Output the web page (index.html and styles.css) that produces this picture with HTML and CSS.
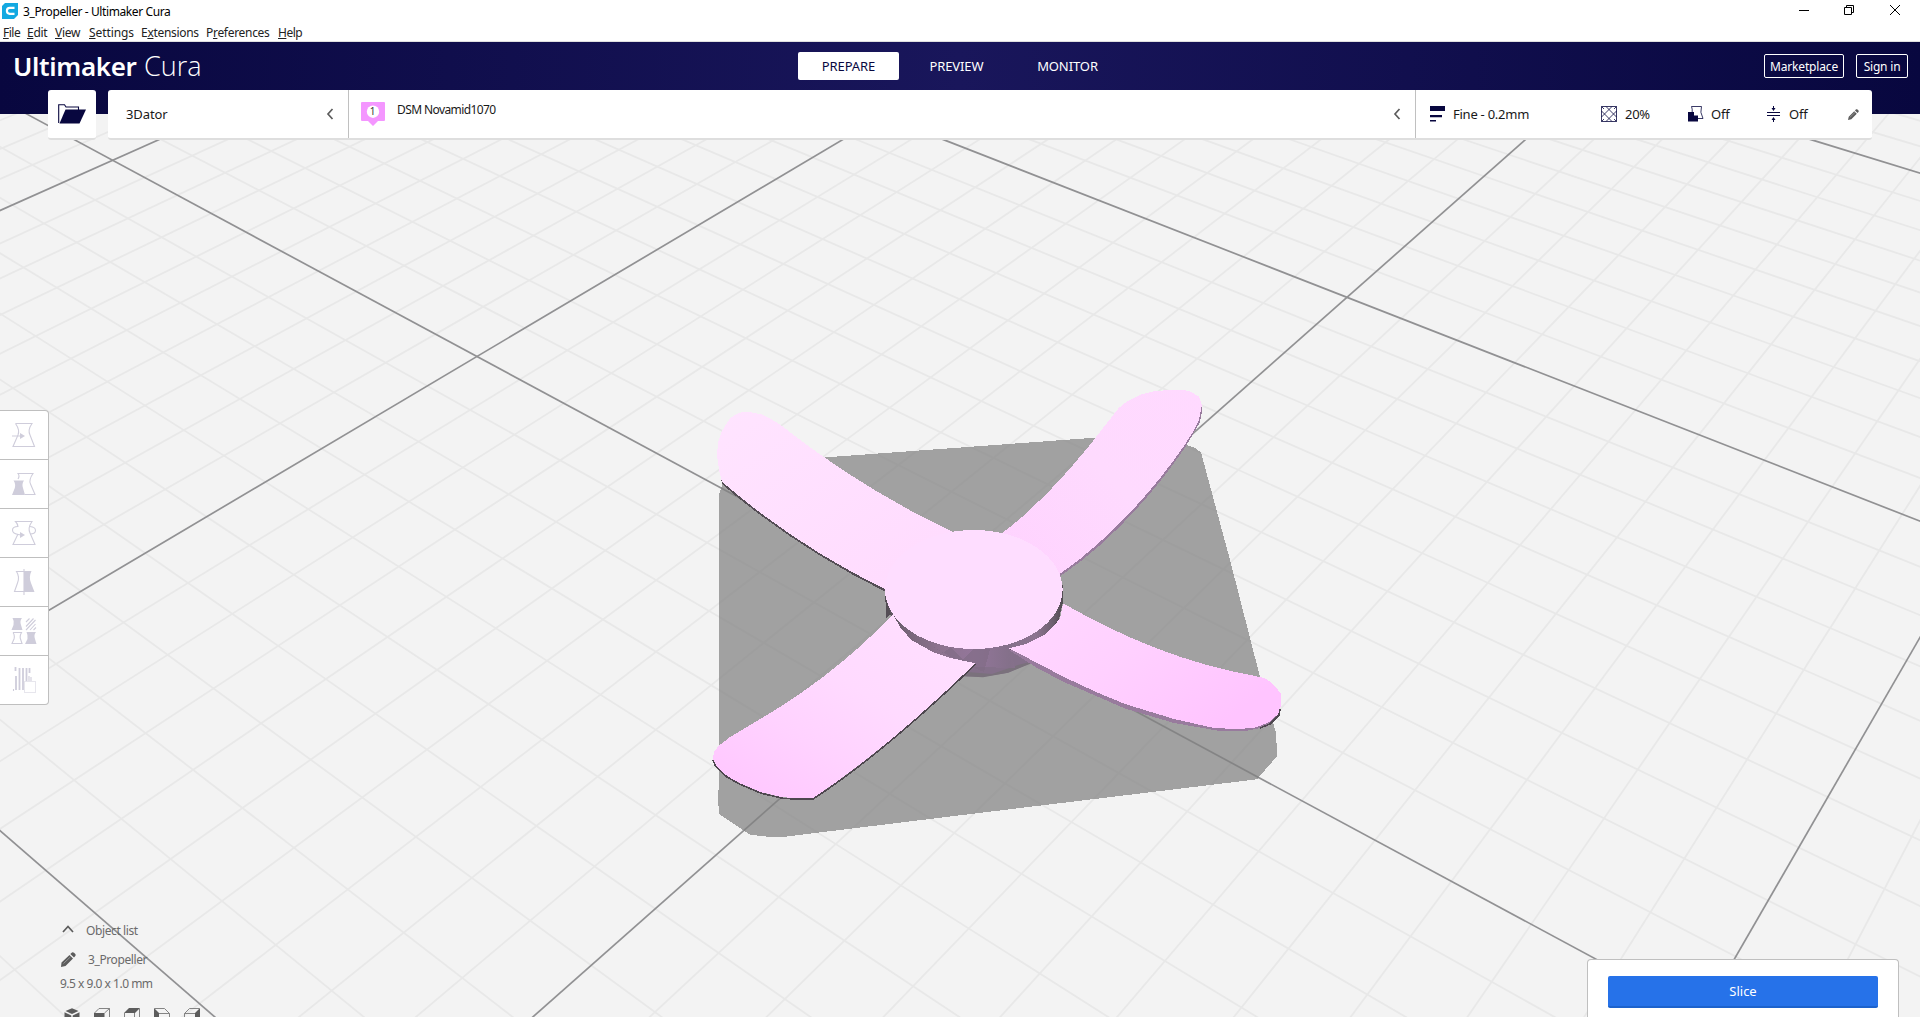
FILE: index.html
```html
<!DOCTYPE html>
<html lang="en">
<head>
<meta charset="utf-8">
<title>3_Propeller - Ultimaker Cura</title>
<link rel="stylesheet" href="styles.css">
</head>
<body>
<svg class="scene" viewBox="0 0 1920 1017" width="1920" height="1017">
  <defs>
    <linearGradient id="tl" x1="0" y1="0" x2="1" y2="1"><stop offset="0" stop-color="#ffe4ff"/><stop offset="1" stop-color="#ffdafe"/></linearGradient>
    <linearGradient id="tr" x1="1" y1="0" x2="0" y2="1"><stop offset="0" stop-color="#ffd9ff"/><stop offset=".45" stop-color="#fedafe"/><stop offset="1" stop-color="#ffd1ff"/></linearGradient>
    <linearGradient id="br" x1="0" y1="0" x2="1" y2=".6"><stop offset="0" stop-color="#ffd8ff"/><stop offset=".5" stop-color="#ffd0ff"/><stop offset="1" stop-color="#ffc4ff"/></linearGradient>
    <linearGradient id="bl" x1="1" y1="0" x2=".1" y2="1"><stop offset="0" stop-color="#ffe0ff"/><stop offset=".45" stop-color="#ffdaff"/><stop offset=".7" stop-color="#ffd2ff"/><stop offset="1" stop-color="#ffc6ff"/></linearGradient>
    <linearGradient id="rim" x1="0" y1="0" x2="1" y2="0"><stop offset="0" stop-color="#5a535c"/><stop offset=".12" stop-color="#776579"/><stop offset=".3" stop-color="#8d738f"/><stop offset=".5" stop-color="#93769a"/><stop offset=".7" stop-color="#84708a"/><stop offset=".85" stop-color="#8d7490"/><stop offset=".95" stop-color="#6c5f6e"/><stop offset="1" stop-color="#524c53"/></linearGradient>
  </defs>
  <g id="grid"></g>
  <polygon class="shadow" points="719,495 723,483 825,457.4 1095,437.7 1186,445 1195,448 1201,452.5 1230,560 1260,677 1276,733 1277.2,756 1257,779.3 960,815.3 785,836.7 768,836.7 750,834.7 719.3,814.3 718,800 719,780"/>
  <path class="hub" d="M963 676L983 676.8 1008 672.7 1031 662.7 1010 645 960 650Z"/>
  <path class="hub-shade" d="M967 672L992 674 1018 665 1030 662 1031 663.5 1008 672.7 983 677.2 963 676.3Z"/>
  <g shape-rendering="crispEdges">
    <path class="edge-dark" d="M721 480L723 485C768 524 825 562 885 591.5L885 586 722 478Z"/>
    <path fill="url(#tl)" d="M722 481.7L719 470 717 455 718 443 721 433 725.7 425 730 418.5 736.4 414 742 412.3 749 412 761.4 414.3 769 418 779.3 424C832 466 893 504 952.5 531.7L962 590 884.6 589C825 560 768 522 722 481.7Z"/>
    <path class="edge-mauve" d="M1202 404L1202 412 1200 422 1186 446C1153 495 1107 545 1060.4 576L1058 568Z"/>
    <path fill="url(#tr)" d="M1002.5 532.7C1035 509 1074 467 1107 423L1118.6 408.3 1124 403.5 1132.9 398.3 1142 394.2 1154.3 391.3 1172 389.7 1184 390 1190 391.3 1199 396.7 1201.8 405 1199 420 1193 432 1184.6 445C1152 493 1105 543 1060.4 573.5L1010 590Z"/>
    <path class="edge-dark" d="M885 585L886 618 893 613 1020 654 1043.6 637 1058 622 1062.5 604 1062.5 585Z"/>
    <path fill="url(#rim)" d="M886 598L893 621 901 631 911.4 641 933 653 951 659 976 667 1015 668 1010 648 1026 644 1044 635 1054 626 1060 616 1062 600Z"/>
    <path class="facet" d="M932 646L943 653 951 647 963 660 973 649 990 649 984 672 969 666 951 657Z"/>
    <path fill="url(#bl)" d="M893 614L890.7 616.7C845 664 800 696 754.3 722.5L729.3 737.5 718.6 746 714 752 712.9 758.3 715 764 718.6 768.3 727 776 740 783.3 761.4 792.3 782.9 797.3 800.7 798.3 813.2 798C868 762 925 712 975.7 663.3L969 662 950.7 658 932.9 652 911.4 640 900 627Z"/>
    <path class="line-dark" d="M713 760L715 765 718.6 769.5 727 777 740 784.3 761.4 793.3 782.9 798.3 800.7 799.3 813.2 799C868 763 925 713 975.7 664"/>
    <path class="edge-mauve" d="M1009 650L1037 668 1064 682 1125 708.5 1174 723 1223 731.5 1245 731 1266 727 1277 717 1280 706 1240 700 1100 660Z"/>
    <path fill="url(#br)" d="M1063 603.3C1122 637 1185 664 1260 677L1266 679 1271 682 1275.3 686.7 1280.8 693.3 1281.4 703.3 1279 713.3 1269 722.3 1254 728 1235 729 1214 728 1174 719 1125 704 1096 692 1064 677 1009 648.3 1026 644 1044 635 1054 626 1060 618Z"/>
    <path class="line-dark" d="M1280 709L1279 715 1270 724 1260 728"/>
    <ellipse cx="973.8" cy="589.5" rx="88.8" ry="59.5" fill="#feddff"/>
  </g>
</svg>

<div class="app">
  <header class="titlebar">
    <svg class="app-icon" width="16" height="16" viewBox="0 0 16 16"><path d="M3 0H16V12L12 16H0V3Z" fill="#14a9e1"/><path d="M12.5 4.9H7.8Q4.9 4.9 4.9 7.8T7.8 10.8H12.5" fill="none" stroke="#fff" stroke-width="2.2"/></svg>
    <span class="title">3_Propeller - Ultimaker Cura</span>
    <svg class="window-controls" width="102" height="12" viewBox="0 0 102 12" fill="none" stroke="#000"><path d="M0 6.5H10M45.500 3.500H52.500V10.500H45.500ZM47.500 3.500V1.500H54.500V8.500H52.500M91 1L101 11M101 1L91 11"/></svg>
  </header>
  <nav class="menubar">
    <span class="m-file"><u>F</u>ile</span><span class="m-edit"><u>E</u>dit</span><span class="m-view"><u>V</u>iew</span><span class="m-set"><u>S</u>ettings</span><span class="m-ext">E<u>x</u>tensions</span><span class="m-pref">P<u>r</u>eferences</span><span class="m-help"><u>H</u>elp</span>
  </nav>
  <div class="header">
    <div class="brand"><b>Ultimaker</b><span>Cura</span></div>
    <div class="tabs"><span class="tab active">PREPARE</span><span class="tab">PREVIEW</span><span class="tab monitor">MONITOR</span></div>
    <div class="account"><span class="btn market">Marketplace</span><span class="btn signin">Sign in</span></div>
  </div>
  <div class="stage">
    <div class="card open">
      <svg width="28" height="20" viewBox="0 0 28 20"><path d="M.7 19V.7H6.5L8 3H20.5V6" fill="none" stroke="#08073f" stroke-width="1.1"/><path d="M7.5 5.5H28L21.5 19.5H1.5Z" fill="#08073f"/></svg>
    </div>
    <div class="card config">
      <div class="printer"><span>3Dator</span><svg width="8" height="12" viewBox="0 0 8 12"><path d="M6.5 1L2 6L6.5 11" class="chev"/></svg></div>
      <div class="material">
        <svg width="24" height="24" viewBox="0 0 24 24"><path d="M1 0H23Q24 0 24 1V18Q24 19 23 19H17L12 24 7 19H1Q0 19 0 18V1Q0 0 1 0Z" fill="#f496ff"/><circle cx="12" cy="9.7" r="6.2" fill="#fff"/><text x="11.5" y="13.3" class="extruder">1</text></svg>
        <span class="mat-name">DSM Novamid1070</span>
        <svg class="end" width="8" height="12" viewBox="0 0 8 12"><path d="M6.5 1L2 6L6.5 11" class="chev"/></svg>
      </div>
      <div class="settings">
        <div class="quality"><svg width="15" height="16" viewBox="0 0 15 16"><path d="M0 0H15V5H0ZM0 9H12V11.2H0ZM0 14H6V15.5H0Z" fill="#08073f"/></svg><span>Fine - 0.2mm</span></div>
        <div class="infill"><svg width="16" height="16" viewBox="0 0 16 16" fill="none" stroke="#08073f" stroke-width=".8"><path d="M.5.5H15.5V15.5H.5ZM5 .5L15.5 11M11 .5L.5 11M.5 5L11 15.5M15.5 5L5 15.5M.5 .5L3 3M15.5 .5L13 3M.5 15.5L3 13M15.5 15.5L13 13"/></svg><span>20%</span></div>
        <div class="support"><svg width="16" height="16" viewBox="0 0 16 16"><path d="M4.2 6.2Q4.5 3 3.5.5H13.5Q11.5 6 15 12.5H10" fill="none" stroke="#08073f" stroke-width=".8"/><path d="M0 6H6V9.5H10V15.5H0Z" fill="#08073f"/></svg><span>Off</span></div>
        <div class="adhesion"><svg width="13" height="16" viewBox="0 0 13 16"><path d="M0 6.5H13M0 9.5H13M6.5 0V3M6.5 13V16" stroke="#08073f" fill="none"/><path d="M4.5 2H8.5L6.5 5ZM4.5 14H8.5L6.5 11Z" fill="#08073f"/></svg><span>Off</span></div>
        <svg class="pencil" width="11" height="11" viewBox="0 0 15 15"><path d="M0 15L1 10.500 8.500 3 12 6.500 4.500 14ZM9.500 2L11 .5Q12 -.2 13 .8L14.300 2Q15 3 14.300 4L13 5.500Z" fill="#5c5c5c"/><path d="M2.500 11.500L9.500 4.800" stroke="#b5b5b5" stroke-width=".8"/></svg>
      </div>
    </div>
  </div>
  <div class="workspace">
    <div class="tools">
      <div class="tool"><svg viewBox="0 0 26 26"><path d="M4.5 1.5H21Q16.5 8 19 13L23.500 24.500H2L7 13Q9 8 4.500 1.500" class="ln"/><path d="M1 14H9" class="ln"/><path d="M9 11L14 14 9 17Z"/></svg></div>
      <div class="tool"><svg viewBox="0 0 26 26"><path d="M7 8Q9 5 7 2.500H22Q17.500 9 19.500 13L24 23.500H14" class="ln"/><path d="M2.500 9.500H13Q10.500 13 12 17L14 24H1L3.800 17Q5 13 2.500 9.500Z"/></svg></div>
      <div class="tool"><svg viewBox="0 0 26 26"><path d="M7 14L2 24.500H24L19 13Q16.500 8 21 1.500H4.500Q7 4 7 7" class="ln"/><path d="M7 6.500Q1.500 6.500 1.500 10T7 14.500L10 15M19 6.500Q24.500 7 24.500 10.500T19 14" class="ln"/><path d="M9 12L14 15 9 18Z"/></svg></div>
      <div class="tool"><svg viewBox="0 0 26 26"><path d="M13 2.500H5.500Q9 8 6.500 14L3.500 22.500H13M13 0V26" class="ln"/><path d="M13 2H20.500Q17.500 8 20 14L23.500 23H13Z"/></svg></div>
      <div class="tool"><svg viewBox="0 0 26 26"><path d="M1.500 0H11Q8.500 3 10 7L11.500 12H.5L2.500 7Q3.500 3 1.500 0ZM15.500 14H25Q22.500 17 24 21L25.500 26H14L16.500 21Q17 17 15.500 14Z"/><path d="M2 14.500H10.500Q8.500 18 9.500 21L11 25.500H1L3 21Q4 17 2 14.500" class="ln"/><path d="M15 4L18.500 .5M15 8.500L22.500 .5M15 12L24.500 2M19 12L24.500 6M22.500 12L25 9.500" class="ln"/></svg></div>
      <div class="tool"><svg viewBox="0 0 26 26"><path d="M4.500 0V4M5 9V23M8.500 1V23M12 1V23M15.500 1V14M18.500 1V6" class="ln bars"/><path d="M2.500 22V24M18 9V14M20 10V14" class="ln"/><path d="M13.500 14.500H24.500V25.500H13.500Z" class="ln" stroke-dasharray="1 1"/></svg></div>
    </div>
    <div class="objects">
      <div class="row list-head"><svg width="12" height="8" viewBox="0 0 12 8"><path d="M1 7L6 1.500 11 7" class="chev"/></svg><span>Object list</span></div>
      <div class="row item"><svg width="15" height="15" viewBox="0 0 15 15"><path d="M0 15L.5 10.500 8.500 3 12 6.500 4.500 14ZM9.300 2L11 .5Q12 -.2 13 .8L14.300 2Q15 3 14.300 4L13 5.500Z" fill="#5c5c5c"/><path d="M2.500 11.500L9.500 4.800" stroke="#aaa" stroke-width=".7"/></svg><span>3_Propeller</span></div>
      <div class="row dims"><span>9.5 x 9.0 x 1.0 mm</span></div>
      <div class="views">
        <svg viewBox="0 0 16 16"><path d="M8 .3L14.500 3 8 6 1.500 3ZM.5 4.200L7.300 7.400V16H.5ZM15.500 4.200L8.700 7.400V16H15.500Z"/></svg>
        <svg viewBox="0 0 16 16"><path d="M0 5H10.500V16H0Z"/><path class="cl" d="M.5 5L5 .5H15.500V11L10.500 16M10.500 5L15.500 .5"/></svg>
        <svg viewBox="0 0 16 16"><path d="M0 5L5 0H16L11 5Z"/><path class="cl" d="M.5 5V16M10.500 5V16M15.500 .5V11L11 16"/></svg>
        <svg viewBox="0 0 16 16"><path d="M0 0L5 5V16H0Z"/><path class="cl" d="M.5 .5H10.500L15.500 5.500V16M5 5.500H15.500"/></svg>
        <svg viewBox="0 0 16 16"><path d="M16 0L11 5V16H16Z"/><path class="cl" d="M15.500 .5H5.500L.5 5.500V16M.5 5.500H11"/></svg>
      </div>
    </div>
    <div class="action"><div class="slice">Slice</div></div>
  </div>
</div>
<script src="grid.js"></script>
</body>
</html>
```
FILE: grid.js
```js
// Draws the build-plate grid: plate coordinates (u, v) are projected to the viewport.
const anchors = [
  [0, 1, 112.6, 160.3],
  [2, 2, 375.3, 1156.2],
  [3, 1, 1701.5, 1016],
  [2, 0, 1347, 297.3]
];

function solve(m) {
  const n = m.length;
  for (let i = 0; i < n; i++) {
    let p = i;
    for (let r = i; r < n; r++) if (Math.abs(m[r][i]) > Math.abs(m[p][i])) p = r;
    [m[i], m[p]] = [m[p], m[i]];
    for (let r = 0; r < n; r++) {
      if (r === i) continue;
      const f = m[r][i] / m[i][i];
      for (let c = i; c <= n; c++) m[r][c] -= f * m[i][c];
    }
  }
  return m.map((row, i) => row[n] / row[i]);
}

const rows = [];
for (const [u, v, x, y] of anchors) {
  rows.push([u, v, 1, 0, 0, 0, -u * x, -v * x, x]);
  rows.push([0, 0, 0, u, v, 1, -u * y, -v * y, y]);
}
const [a, b, c, d, e, f, g, h] = solve(rows);
const project = (u, v) => [a * u + b * v + c, d * u + e * v + f, g * u + h * v + 1];

function toLine(p, q) {
  // Line through two homogeneous points, extended over the whole viewport.
  const A = p[1] * q[2] - p[2] * q[1];
  const B = p[2] * q[0] - p[0] * q[2];
  const C = p[0] * q[1] - p[1] * q[0];
  return [-10, -(C - 10 * A) / B, 1930, -(C + 1930 * A) / B];
}

const grid = document.getElementById('grid');
function draw(index, coords) {
  const line = document.createElementNS('http://www.w3.org/2000/svg', 'line');
  ['x1', 'y1', 'x2', 'y2'].forEach((k, i) => line.setAttribute(k, coords[i].toFixed(2)));
  line.setAttribute('class', index % 10 === 0 ? 'major' : 'minor');
  index % 10 === 0 ? grid.append(line) : grid.prepend(line);
}

for (let i = -14; i <= 38; i++) draw(i, toLine(project(i / 10, 0), project(i / 10, 1)));
for (let i = -14; i <= 28; i++) draw(i, toLine(project(0, i / 10), project(1, i / 10)));
```
FILE: styles.css
```css
* { box-sizing: border-box; }
body { margin: 0; width: 1920px; height: 1017px; overflow: hidden; position: relative; background: #f3f3f3; font-family: "Noto Sans", sans-serif; font-size: 13px; color: #191919; }
svg { display: block; flex: none; }
.scene { position: absolute; left: 0; top: 0; }
.minor { stroke: #e8e8e8; stroke-width: 1.8; }
.major { stroke: #919193; stroke-width: 1.7; }
.shadow { fill: #808080; fill-opacity: .714; shape-rendering: crispEdges; }
.hub { fill: #84708a; }
.hub-shade { fill: #7a717c; }
.facet { fill: #7f6a84; opacity: .6; }
.edge-dark { fill: #544d55; }
.edge-mauve { fill: #987b9d; }
.line-dark { fill: none; stroke: #4e474f; stroke-width: 1.6; }

.app { position: relative; width: 1920px; height: 1017px; display: flex; flex-direction: column; }
.titlebar { height: 23px; background: #fff; display: flex; align-items: flex-start; padding: 3px 19px 0 2px; color: #000; font-size: 12px; line-height: 17px; }
.title { margin-left: 5px; letter-spacing: -.4px; }
.window-controls { margin: 1px 0 0 auto; }
.menubar { height: 19px; background: #fff; border-bottom: 1px solid #e0e0e0; display: flex; padding-left: 3px; font-size: 12px; line-height: 19px; color: #222; letter-spacing: -.3px; }
.menubar span { white-space: nowrap; }
.menubar u { text-decoration: underline 1px #222; text-decoration-skip-ink: none; text-underline-offset: 1px; }
.m-file { width: 24px; } .m-edit { width: 28px; } .m-view { width: 34px; } .m-set { width: 52px; letter-spacing: -.1px; } .m-ext { width: 65px; } .m-pref { width: 72px; }
.m-file, .m-help { letter-spacing: -.5px; }

.header { height: 72px; padding: 0 12px 24px 13px; background: linear-gradient(90deg, #08073f, #19165b 50%, #08073f); display: grid; grid-template-columns: 785px 1fr auto; align-items: center; color: #fff; }
.brand { display: flex; align-items: baseline; font-size: 26px; line-height: 46px; }
.brand b { width: 131px; font-weight: 600; letter-spacing: -.35px; }
.brand span { font-family: "Open Sans", sans-serif; font-weight: 300; font-size: 27px; }
.tabs { display: flex; gap: 7px; letter-spacing: -.1px; }
.tab { width: 101px; height: 28px; line-height: 28px; text-align: center; border-radius: 2px; }
.monitor { margin-left: 3px; }
.tab.active { background: #fff; color: #08073f; }
.account { display: flex; gap: 12px; font-size: 12px; }
.btn { height: 24px; line-height: 23px; border: 1px solid #fff; border-radius: 2px; text-align: center; white-space: nowrap; }
.market { width: 80px; letter-spacing: -.15px; }
.signin { width: 52px; letter-spacing: -.2px; }

.stage { margin: -24px 48px 0; height: 50px; display: flex; gap: 12px; }
.card { background: #fff; border-bottom: 2px solid #dedede; border-radius: 3px; }
.open { width: 48px; padding: 14px 0 0 10px; }
.config { flex: 1; display: flex; line-height: 48px; }
.printer { width: 241px; border-right: 1px solid #c0c0c0; display: flex; align-items: center; justify-content: space-between; padding: 0 14px 0 18px; letter-spacing: -.1px; }
.material { width: 1067px; border-right: 1px solid #c0c0c0; display: flex; align-items: center; padding: 0 14px 0 12px; }
.mat-name { margin: -8px 0 0 12px; font-size: 12px; line-height: 20px; letter-spacing: -.6px; }
.end { margin-left: auto; }
.chev { fill: none; stroke: #5c5c5c; stroke-width: 1.7; }
.extruder { font-size: 10px; text-anchor: middle; fill: #333; }
.settings { flex: 1; display: flex; align-items: center; padding-left: 14px; letter-spacing: -.25px; }
.settings div { display: flex; align-items: center; gap: 8px; white-space: nowrap; }
.quality { width: 171px; } .infill { width: 87px; } .support { width: 79px; } .adhesion { width: 81px; }
.settings .support { gap: 7px; }
.settings .adhesion { gap: 9px; }

.workspace { flex: 1; position: relative; display: grid; grid-template-columns: 60px 1fr auto; }
.tools { align-self: start; width: 49px; margin-top: 270px; border: 1px solid #bfbfbf; border-left: 0; border-radius: 0 4px 4px 0; background: #fff; overflow: hidden; }
.tool { height: 49px; padding: 11px 0 0 11px; border-bottom: 1px solid #bfbfbf; }
.tool:last-child { border-bottom: 0; height: 48px; }
.tool svg { width: 26px; height: 26px; fill: #cfcddb; }
.ln { fill: none; stroke: #cfcddb; stroke-width: 1.1; }
.bars { stroke-width: 1.8; }
.objects { padding-top: 781px; font-size: 12px; color: #6a6a6a; letter-spacing: -.4px; }
.row { display: flex; align-items: center; height: 18px; white-space: nowrap; }
.list-head { padding-left: 2px; gap: 12px; }
.list-head svg { margin-top: -3px; }
.item { margin-top: 11px; gap: 12px; padding-left: 1px; }
.item svg { margin-top: 1px; }
.dims { margin-top: 6px; letter-spacing: -.5px; }
.views { display: flex; gap: 14px; padding: 16px 0 0 4px; height: 25px; overflow: hidden; }
.views svg { width: 16px; height: 16px; fill: #5c5c5c; }
.views .cl { fill: none; stroke: #777; stroke-width: .9; }
.action { width: 312px; margin: 819px 21px 0 0; padding: 16px 20px 0; background: #fff; border: 1px solid #bfbfbf; border-bottom: 0; border-radius: 4px 4px 0 0; }
.slice { height: 32px; line-height: 31px; background: #2672e9; border-bottom: 2px solid #1c62cc; border-radius: 2px; color: #fff; text-align: center; }
```
